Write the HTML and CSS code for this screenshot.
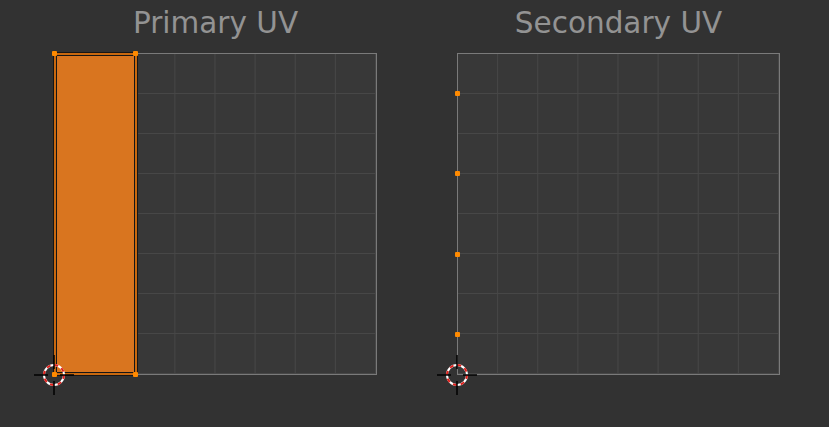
FILE: index.html
```html
<!DOCTYPE html>
<html>
<head>
<meta charset="utf-8">
<link rel="stylesheet" href="styles.css">
</head>
<body>
<div class="views">
  <section class="view">
    <h1 class="title">Primary UV</h1>
    <div class="panel">
      <div class="face"></div>
      <span class="vert" style="left:0;top:0"></span>
      <span class="vert" style="left:81px;top:0"></span>
      <span class="vert" style="left:0;top:321px"></span>
      <span class="vert" style="left:81px;top:321px"></span>
      <svg class="cursor" width="44" height="44" viewBox="-22 -22 44 44">
        <circle r="10" fill="none" stroke="#ffffff" stroke-width="2"/>
        <circle r="10" fill="none" stroke="#e0201c" stroke-width="2" stroke-dasharray="4 3.85"/>
        <path d="M-20 0H-6M6 0H20M0 -20V-6M0 6V20" stroke="#000" stroke-width="1.5"/>
      </svg>
    </div>
  </section>
  <section class="view">
    <h1 class="title">Secondary UV</h1>
    <div class="panel">
      <span class="vert" style="left:0;top:40px"></span>
      <span class="vert" style="left:0;top:120px"></span>
      <span class="vert" style="left:0;top:201px"></span>
      <span class="vert" style="left:0;top:281px"></span>
      <svg class="cursor" width="44" height="44" viewBox="-22 -22 44 44">
        <circle r="10" fill="none" stroke="#ffffff" stroke-width="2"/>
        <circle r="10" fill="none" stroke="#e0201c" stroke-width="2" stroke-dasharray="4 3.85"/>
        <path d="M-20 0H-6M6 0H20M0 -20V-6M0 6V20" stroke="#000" stroke-width="1.5"/>
      </svg>
    </div>
  </section>
</div>
</body>
</html>
```
FILE: styles.css
```css
html, body {
  margin: 0;
  padding: 0;
  background: #323232;
  width: 829px;
  height: 427px;
  overflow: hidden;
}

.views {
  display: flex;
  gap: 80px;
  padding-left: 54px;
}

.view {
  display: flex;
  flex-direction: column;
  width: 323px;
}

.title {
  margin: 0;
  padding-top: 5px;
  height: 36px;
  margin-bottom: 12px;
  font-family: "DejaVu Sans", sans-serif;
  font-weight: normal;
  font-size: 29.5px;
  line-height: 36px;
  color: #939393;
  text-align: center;
  white-space: nowrap;
}

.panel {
  position: relative;
  box-sizing: border-box;
  width: 323px;
  height: 322px;
  border: 1px solid #7a7a7a;
  background-color: #383838;
  background-image:
    linear-gradient(to right, #474747 1px, transparent 1px),
    linear-gradient(to bottom, #474747 1px, transparent 1px);
  background-size: 12.5% 12.5%;
  background-position: -1px -1px;
}

.face {
  position: absolute;
  left: -1px;
  top: -1px;
  width: 83px;
  height: 322px;
  box-sizing: border-box;
  background: rgba(226, 120, 30, 0.95);
  border: 2px solid #c8680f;
  box-shadow: 0 0 0 1px #161616, inset 0 0 0 1px #161616;
}

.vert {
  position: absolute;
  width: 5px;
  height: 5px;
  margin-left: -3px;
  margin-top: -3px;
  border-radius: 1px;
  background: #ff8a00;
}

.cursor {
  position: absolute;
  left: -23px;
  top: 299px;
}
```
